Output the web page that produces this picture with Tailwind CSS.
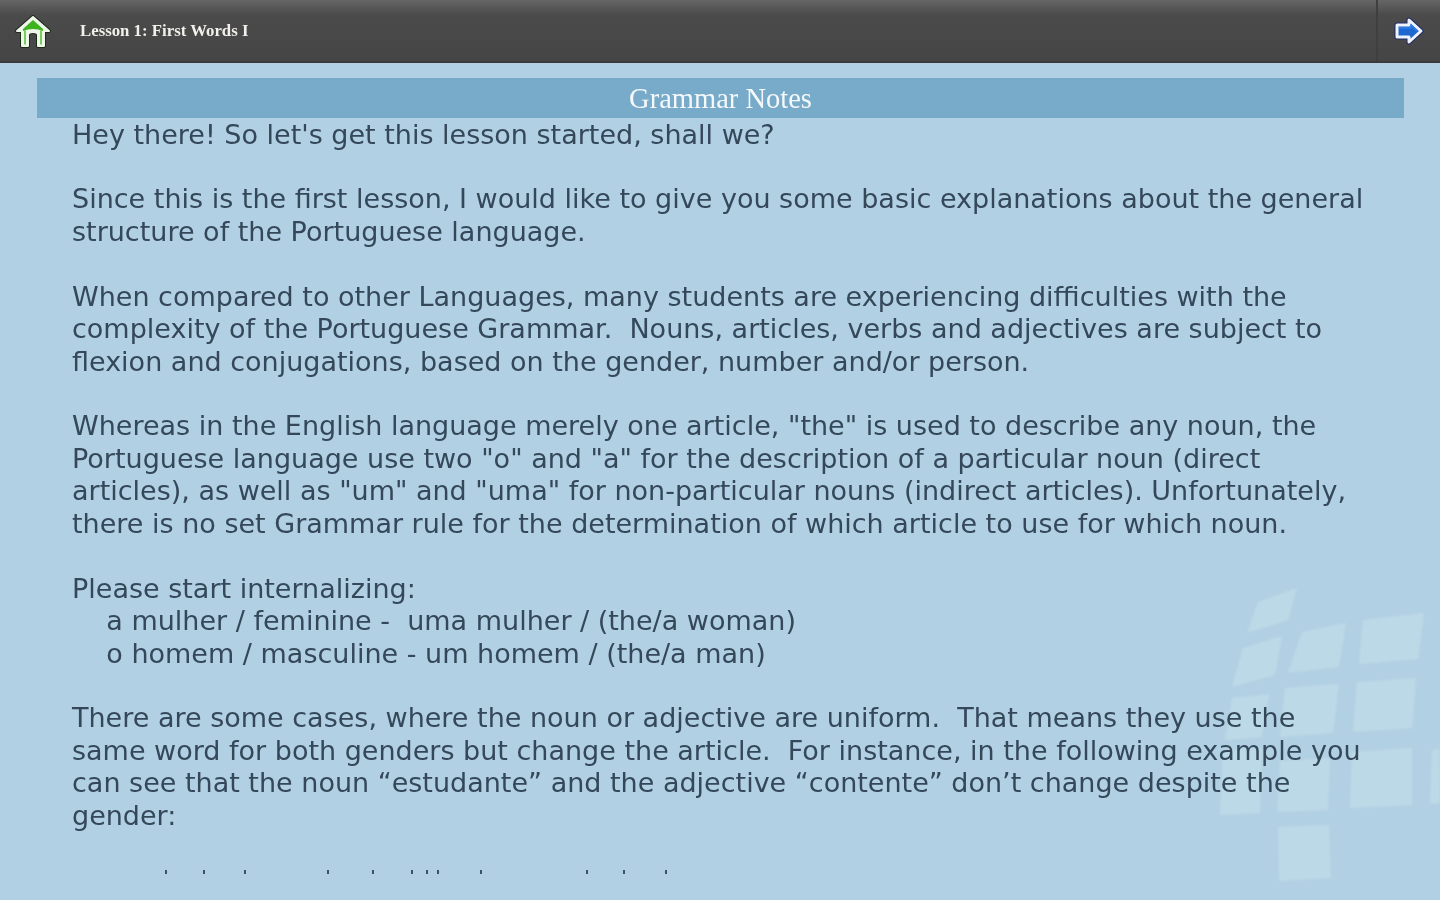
<!DOCTYPE html>
<html lang="en">
<head>
  <meta charset="UTF-8">
  <title>Grammar Notes</title>
  <script src="https://cdn.jsdelivr.net/npm/@tailwindcss/browser@4"></script>
</head>
<body class="relative w-[1440px] h-[900px] overflow-hidden bg-[#b2d0e3] font-['DejaVu_Sans',sans-serif]">
  <!-- watermark -->
  <svg class="absolute inset-0 blur-[1px]" width="1440" height="900" fill="#bcd9e7">
    <polygon points="1258,602 1297,588 1288,620 1247,633"/>
    <polygon points="1243,648 1282,636 1275,675 1232,687"/>
    <polygon points="1302,632 1346,623 1339,667 1288,673"/>
    <polygon points="1363,620 1424,613 1418,659 1359,664"/>
    <polygon points="1232,698 1269,694 1262,737 1225,740"/>
    <polygon points="1285,688 1339,684 1333,733 1280,737"/>
    <polygon points="1357,682 1416,678 1412,728 1353,732"/>
    <polygon points="1223,750 1262,748 1260,813 1220,815"/>
    <polygon points="1280,761 1330,758 1328,810 1277,812"/>
    <polygon points="1352,752 1412,748 1412,805 1350,808"/>
    <polygon points="1432,750 1440,749 1440,803 1430,804"/>
    <polygon points="1278,827 1329,825 1331,878 1279,881"/>
  </svg>

  <!-- top bar -->
  <header class="relative flex items-center h-[63px] bg-gradient-to-b from-[#666666] via-[#4b4b4b] via-[24%] to-[#454545] border-b-2 border-[#3b3b3b]">
    <svg class="ml-[14px] mt-[2px] blur-[0.6px]" width="38" height="36" viewBox="0 0 38 36" stroke-linejoin="round" stroke-linecap="round">
      <path d="M19 3 L35 17 L30 17 L30 32 L24 32 L24 21 Q24 18 19 18 Q14 18 14 21 L14 32 L8 32 L8 17 L3 17 Z" fill="#1d2b18" stroke="#1d2b18" stroke-width="4"/>
      <path d="M19 3 L35 17 L30 17 L30 32 L24 32 L24 21 Q24 18 19 18 Q14 18 14 21 L14 32 L8 32 L8 17 L3 17 Z" fill="#eff6ea" stroke="#eff6ea" stroke-width="2"/>
      <path d="M19 6 L29 15 L29 17 Q19 13 9 17 L9 15 Z" fill="#3db41e"/>
      <path d="M11 17 L11 30 M27 17 L27 30" stroke="#5cc43c" stroke-width="1.6"/>
    </svg>
    <h1 class="ml-[28px] mt-[1px] font-['Liberation_Serif',serif] font-bold text-[16.8px] leading-none text-[#f2f0ea] blur-[0.7px]">Lesson 1: First Words I</h1>
    <div class="ml-auto flex items-center justify-center w-[64px] h-full border-l-2 border-[#3f3f3f]">
      <svg class="ml-[-3px] blur-[0.6px]" width="32" height="32" viewBox="0 0 32 32" stroke-linejoin="round">
        <path d="M17 5 L29 16 L17 27 L17 22 L5 22 L5 10 L17 10 Z" fill="#1c2a6a" stroke="#1c2a6a" stroke-width="5"/>
        <path d="M17 5 L29 16 L17 27 L17 22 L5 22 L5 10 L17 10 Z" fill="#1e66d0" stroke="#f0f3fb" stroke-width="3"/>
        <path d="M7 13 L19 13 L19 10 L25 16" fill="none" stroke="#2f7fe8" stroke-width="1.5"/>
      </svg>
    </div>
  </header>

  <main class="relative pt-[15px] px-[37px]">
    <div class="w-[1367px] h-[40px] pt-[2px] flex items-center justify-center bg-[#78abc9] font-['Liberation_Serif',serif] text-[28.5px] leading-none text-[#f4f8fa] blur-[0.7px]">Grammar Notes</div>

    <div class="pt-[0.6px] pl-[35px] text-[27px] leading-[32.43px] text-[#34485a] blur-[0.7px] [&>p]:whitespace-pre">
      <p>Hey there! So let's get this lesson started, shall we?</p>
      <p class="mt-[32.43px]">Since this is the first lesson, I would like to give you some basic explanations about the general
structure of the Portuguese language.</p>
      <p class="mt-[32.43px]">When compared to other Languages, many students are experiencing difficulties with the
complexity of the Portuguese Grammar.  Nouns, articles, verbs and adjectives are subject to
flexion and conjugations, based on the gender, number and/or person.</p>
      <p class="mt-[32.43px]">Whereas in the English language merely one article, "the" is used to describe any noun, the
Portuguese language use two "o" and "a" for the description of a particular noun (direct
articles), as well as "um" and "uma" for non-particular nouns (indirect articles). Unfortunately,
there is no set Grammar rule for the determination of which article to use for which noun.</p>
      <p class="mt-[32.43px]">Please start internalizing:
    a mulher / feminine -  uma mulher / (the/a woman)
    o homem / masculine - um homem / (the/a man)</p>
      <p class="mt-[32.43px]">There are some cases, where the noun or adjective are uniform.  That means they use the
same word for both genders but change the article.  For instance, in the following example you
can see that the noun “estudante” and the adjective “contente” don’t change despite the
gender:</p>
    </div>

    <!-- tops of the next line, cut off by the screen -->
    <div class="flex mt-[38px] ml-[128px] blur-[0.7px] [&>i]:block [&>i]:w-[2px] [&>i]:h-[4px] [&>i]:bg-[#3d5261]">
      <i></i><i class="ml-[36px]"></i><i class="ml-[39px]"></i><i class="ml-[81px]"></i><i class="ml-[43px]"></i><i class="ml-[37px]"></i><i class="ml-[13px]"></i><i class="ml-[9px]"></i><i class="ml-[41px]"></i><i class="ml-[104px]"></i><i class="ml-[35px]"></i><i class="ml-[40px]"></i>
    </div>
  </main>
</body>
</html>
